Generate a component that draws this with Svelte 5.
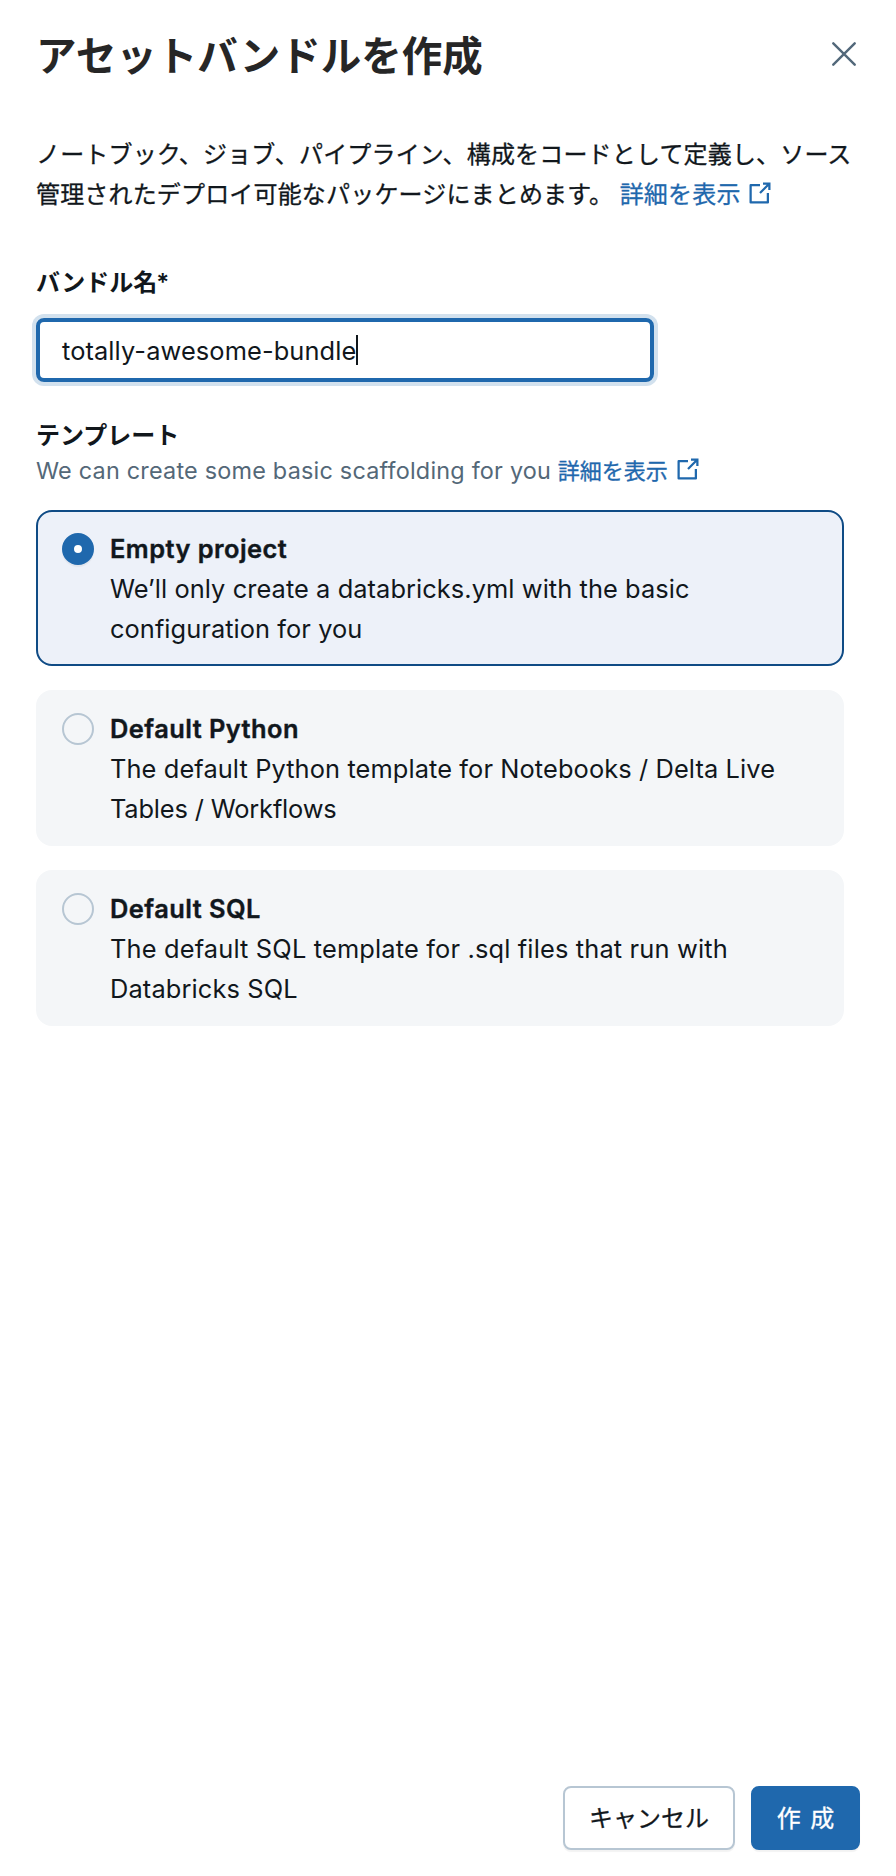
<script>
  let selected = $state('empty');
  const templates = [
    {
      id: 'empty',
      title: 'Empty project',
      lines: [
        { text: 'We’ll only create a databricks.yml with the basic', track: 0.07 },
        { text: 'configuration for you', track: 0.06 }
      ]
    },
    {
      id: 'python',
      title: 'Default Python',
      lines: [
        { text: 'The default Python template for Notebooks / Delta Live', track: 0.1 },
        { text: 'Tables / Workflows', track: -0.16 }
      ]
    },
    {
      id: 'sql',
      title: 'Default SQL',
      lines: [
        { text: 'The default SQL template for .sql files that run with', track: 0.16 },
        { text: 'Databricks SQL', track: 0.13 }
      ]
    }
  ];
</script>

{#snippet external()}
  <svg class="ext" viewBox="0 0 16 16" width="24" height="24" fill="currentColor" aria-hidden="true">
    <path d="M10 1h5v5h-1.5V3.56L8.53 8.53 7.47 7.47l4.97-4.97H10z" />
    <path d="M1 2.75A.75.75 0 0 1 1.75 2H8v1.5H2.5v10h10V8H14v6.25a.75.75 0 0 1-.75.75H1.75a.75.75 0 0 1-.75-.75z" />
  </svg>
{/snippet}

<div class="drawer">
  <header>
    <h1>アセットバンドルを作成</h1>
    <button class="close" aria-label="閉じる">
      <svg viewBox="0 0 24 24" width="24" height="24" fill="none" stroke="currentColor" stroke-width="2.4" stroke-linecap="round">
        <path d="M1.3 1.3 22.7 22.7M22.7 1.3 1.3 22.7" />
      </svg>
    </button>
  </header>

  <p class="intro">
    <span class="line">ノートブック、ジョブ、パイプライン、構成をコードとして定義し、ソース</span>
    <span class="line">管理されたデプロイ可能なパッケージにまとめます。<a class="link" href="#more">詳細を表示{@render external()}</a></span>
  </p>

  <div class="label name-label">バンドル名<span class="star">*</span></div>
  <div class="field"><span class="value">totally-awesome-bundle</span><span class="caret"></span></div>

  <div class="label tpl-label">テンプレート</div>
  <div class="hint"><span class="hint-text">We can create some basic scaffolding for you</span><a class="link small" href="#templates">詳細を表示{@render external()}</a></div>

  <div class="cards">
    {#each templates as t}
      <button class="card" class:on={selected === t.id} onclick={() => (selected = t.id)}>
        <span class="radio"></span>
        <span class="copy">
          <span class="name">{t.title}</span>
          {#each t.lines as l}<span class="desc" style="letter-spacing: {l.track}px">{l.text}</span>{/each}
        </span>
      </button>
    {/each}
  </div>

  <footer>
    <button class="btn">キャンセル</button>
    <button class="btn primary">作 成</button>
  </footer>
</div>

<style>
  :global(body) { background: #fff; }
  .drawer {
    box-sizing: border-box;
    width: 896px;
    height: 1876px;
    padding: 24px 36px 26px;
    display: flex;
    flex-direction: column;
    font-family: Inter, "Noto Sans CJK JP", sans-serif;
    color: #11171c;
    font-size: 24px;
  }
  button { font: inherit; color: inherit; margin: 0; cursor: pointer; }
  header { display: flex; justify-content: space-between; height: 60px; align-items: center; }
  h1 { margin: -1px 0 0; font: 600 40.5px/60px "Noto Sans CJK JP", sans-serif; color: #262626; }
  .close { border: 0; background: none; padding: 0 4px 0 0; color: #52687a; display: flex; }
  .intro {
    margin: 49px 0 0;
    font: 400 24px/40px "Noto Sans CJK JP", sans-serif;
    letter-spacing: 0.17px;
    -webkit-text-stroke: 0.3px currentColor;
  }
  .line { display: flex; white-space: nowrap; height: 40px; }
  .link { display: flex; align-items: center; color: #1f68ad; text-decoration: none; margin-left: 6.5px; }
  .ext { margin: 0 0 0 7px; display: block; }
  .label { font: 600 24px/40px "Noto Sans CJK JP", sans-serif; height: 40px; }
  .star { font-family: Inter, sans-serif; margin-left: -1px; }
  .name-label { margin-top: 48px; }
  .field {
    box-sizing: border-box;
    margin-top: 17px;
    width: 618px;
    height: 64px;
    flex: none;
    border: 4px solid #1f68ad;
    border-radius: 8px;
    box-shadow: 0 0 0 4px #d2e1ee;
    padding: 0 22px;
    display: flex;
    align-items: center;
    font-size: 25.4px;
    letter-spacing: 0.1px;
  }
  .caret { width: 2px; height: 30px; background: #11171c; }
  .tpl-label { margin-top: 32px; }
  .hint { height: 32px; display: flex; align-items: center; font-size: 23.4px; color: #546878; white-space: nowrap; }
  .hint-text { letter-spacing: 0.22px; }
  .small {
    font: 400 22px/32px "Noto Sans CJK JP", sans-serif;
    padding-bottom: 2px;
    -webkit-text-stroke: 0.3px currentColor;
  }
  .small .ext { margin-left: 8.5px; }
  .ext path { stroke: none; }
  .cards { margin-top: 24px; display: flex; flex-direction: column; gap: 24px; width: 808px; }
  .card {
    box-sizing: border-box;
    height: 156px;
    border: 2px solid #f4f6f8;
    border-radius: 16px;
    background: #f4f6f8;
    padding: 17px 24px;
    display: flex;
    align-items: flex-start;
    gap: 16px;
    text-align: left;
  }
  .card.on { background: #edf1f9; border-color: #0f4b85; }
  .radio {
    box-sizing: border-box;
    width: 32px;
    height: 32px;
    flex: none;
    margin-top: 4px;
    border: 2px solid #b7c6d3;
    border-radius: 50%;
  }
  .on .radio { border: 12px solid #1f68ad; background: #fff; box-shadow: 0 2px 1px rgba(0, 0, 0, .05); }
  .copy { display: flex; flex-direction: column; font-size: 25.4px; line-height: 40px; white-space: nowrap; }
  .name { font-weight: 600; letter-spacing: 0.46px; -webkit-text-stroke: 0.4px currentColor; }
  footer { margin-top: auto; display: flex; justify-content: flex-end; gap: 16px; }
  .btn {
    box-sizing: border-box;
    width: 172px;
    height: 64px;
    padding: 0 0 2px;
    border: 2px solid #b7c6d3;
    border-radius: 8px;
    background: #fff;
    box-shadow: 0 2px 1px rgba(0, 0, 0, .05);
    font: 400 24px/40px "Noto Sans CJK JP", sans-serif;
    -webkit-text-stroke: 0.3px currentColor;
  }
  .primary { width: 109px; background: #1f68ad; border-color: #1f68ad; color: #fff; word-spacing: 4px; }
</style>
